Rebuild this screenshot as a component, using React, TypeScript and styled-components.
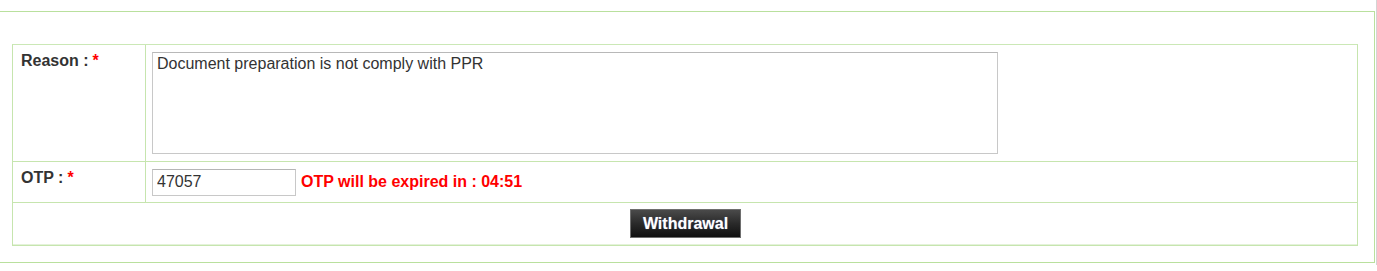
import React from "react";
import styled, { createGlobalStyle } from "styled-components";

const GlobalStyle = createGlobalStyle`
  html, body {
    margin: 0;
    padding: 0;
    background: #fff;
    overflow: hidden;
  }
  body {
    font-family: "Liberation Sans", Arial, sans-serif;
    font-size: 16px;
    color: #333;
  }
`

const Page = styled.div`
  width: 1377px;
  height: 265px;
  border-right: 1px solid #d4d4d4;
  padding-top: 11px;
  box-sizing: border-box;
`

const Panel = styled.div`
  margin-left: -5px;
  width: 1380px;
  box-sizing: border-box;
  border: 1px solid #b9e09d;
  padding: 32px 16px 16px 16px;
`

const FormTable = styled.table`
  width: 1346px;
  border-collapse: separate;
  border-spacing: 0;
  border: 1px solid #c6e5ae;
  border-top-color: #cbe8b6;
`

const Row = styled.tr<{ $last?: boolean }>`
  & > td {
    border-bottom: 1px solid ${p => (p.$last ? "#e4f2da" : "#c6e5ae")};
  }
`

const LabelCell = styled.td`
  width: 124px;
  padding: 7px 0 0 8px;
  vertical-align: top;
  font-weight: bold;
  font-size: 16px;
  line-height: 18px;
  color: #333;
  border-right: 1px solid #c6e5ae;
`

const ValueCell = styled.td<{ $height?: number }>`
  height: ${p => (p.$height ? `${p.$height}px` : "auto")};
  padding: 0 6px;
  vertical-align: middle;
`

const CenterCell = styled.td`
  height: 41px;
  padding: 0;
  text-align: center;
  vertical-align: middle;
`

const Required = styled.span`
  color: #f00;
  margin-left: 4px;
`

const ReasonBox = styled.textarea`
  display: block;
  width: 846px;
  height: 102px;
  box-sizing: border-box;
  margin: 7px 0;
  padding: 2px 4px;
  border: 1px solid #c8c8c8;
  border-top-color: #b8b8b8;
  font-family: "Liberation Sans", Arial, sans-serif;
  font-size: 16px;
  line-height: 18px;
  color: #333;
  resize: none;
  outline: none;
`

const OtpLine = styled.div`
  display: flex;
  align-items: center;
  gap: 5px;
`

const OtpInput = styled.input`
  width: 144px;
  height: 27px;
  box-sizing: border-box;
  margin: 0;
  padding: 0 4px;
  border: 1px solid #c8c8c8;
  border-top-color: #b5b5b5;
  font-family: "Liberation Sans", Arial, sans-serif;
  font-size: 16px;
  color: #333;
  outline: none;
`

const Expiry = styled.span`
  color: #f00;
  font-weight: bold;
  font-size: 16px;
`

const WithdrawButton = styled.button`
  display: inline-block;
  vertical-align: middle;
  width: 111px;
  height: 29px;
  margin: 0 0 0 1px;
  padding: 0;
  border: 1px solid #6e6e6e;
  background: linear-gradient(to bottom, #4a4a4a 0%, #2a2a2a 50%, #101010 100%);
  color: #fff;
  font-family: "Liberation Sans", Arial, sans-serif;
  font-weight: bold;
  font-size: 16px;
  text-shadow: 0 0 1px rgba(160, 180, 255, 0.6);
  cursor: pointer;
`

export default function App() {
  return (
    <>
      <GlobalStyle />
      <Page>
        <Panel>
          <FormTable>
            <tbody>
              <Row>
                <LabelCell>
                  Reason :<Required>*</Required>
                </LabelCell>
                <ValueCell>
                  <ReasonBox defaultValue="Document preparation is not comply with PPR" />
                </ValueCell>
              </Row>
              <Row>
                <LabelCell>
                  OTP :<Required>*</Required>
                </LabelCell>
                <ValueCell $height={40}>
                  <OtpLine>
                    <OtpInput defaultValue="47057" />
                    <Expiry>OTP will be expired in : 04:51</Expiry>
                  </OtpLine>
                </ValueCell>
              </Row>
              <Row $last>
                <CenterCell colSpan={2}>
                  <WithdrawButton>Withdrawal</WithdrawButton>
                </CenterCell>
              </Row>
            </tbody>
          </FormTable>
        </Panel>
      </Page>
    </>
  );
}
